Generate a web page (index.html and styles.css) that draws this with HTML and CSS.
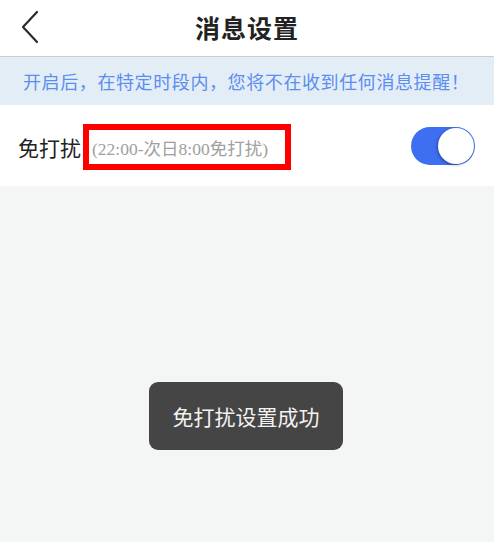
FILE: index.html
```html
<!DOCTYPE html>
<html lang="zh">
<head>
<meta charset="utf-8">
<title>消息设置</title>
<link rel="stylesheet" href="styles.css">
</head>
<body>
<div class="page">
  <header class="header">
    <span class="back">
      <svg width="20" height="34" viewBox="0 0 20 34"><path d="M17 2 L3 17 L17 32" fill="none" stroke="#2b2b2b" stroke-width="2.2" stroke-linecap="round" stroke-linejoin="round"/></svg>
    </span>
    <h1 class="title">消息设置</h1>
  </header>
  <div class="banner">开启后，在特定时段内，您将不在收到任何消息提醒！</div>
  <div class="row">
    <span class="label">免打扰</span>
    <span class="hint">(22:00-次日8:00免打扰)</span>
    <span class="toggle"><span class="knob"></span></span>
  </div>
  <div class="toast">免打扰设置成功</div>
</div>
</body>
</html>
```
FILE: styles.css
```css
* { box-sizing: border-box; }
html, body { margin: 0; padding: 0; }
body {
  font-family: "Noto Sans CJK SC", "Noto Sans", sans-serif;
  background: #f4f5f5;
}
.page {
  position: relative;
  width: 494px;
  height: 542px;
  overflow: hidden;
  background: #f4f5f5;
}
.header {
  position: relative;
  height: 57px;
  background: #fff;
  border-bottom: 1px solid #c9ced3;
  display: flex;
  align-items: center;
  justify-content: center;
}
.back {
  position: absolute;
  left: 20px;
  top: 10px;
  display: flex;
}
.title {
  margin: 0;
  font-size: 25px;
  font-weight: 700;
  color: #222;
  letter-spacing: 1px;
  line-height: 1;
  margin-top: -2px;
}
.banner {
  height: 48px;
  background: #e3edf6;
  color: #5b8ef0;
  font-size: 18px;
  line-height: 48px;
  padding-left: 23px;
  letter-spacing: 0.6px;
}
.row {
  height: 81px;
  background: #fff;
  display: flex;
  align-items: center;
  padding-left: 18px;
  padding-right: 19px;
}
.label {
  font-size: 21px;
  color: #222;
  margin-top: 3px;
}
.hint {
  margin-left: 2px;
  margin-top: 3px;
  height: 46px;
  width: 208px;
  border: 6px solid #ff0000;
  padding-left: 3px;
  display: flex;
  align-items: center;
  font-family: "Liberation Serif", "Noto Sans CJK SC", serif;
  font-size: 17.5px;
  color: #a0a0a0;
  white-space: nowrap;
}
.toggle {
  margin-left: auto;
  position: relative;
  width: 64px;
  height: 38px;
  border-radius: 19px;
  background: #3e6ff1;
}
.knob {
  position: absolute;
  right: 1px;
  top: 1px;
  width: 36px;
  height: 36px;
  border-radius: 50%;
  background: #fff;
  box-shadow: -1px 1px 3px rgba(0,0,0,0.35);
}
.toast {
  position: absolute;
  left: 149px;
  top: 382px;
  width: 194px;
  height: 68px;
  border-radius: 9px;
  background: #454545;
  color: #f2f2f2;
  font-size: 21px;
  display: flex;
  align-items: center;
  justify-content: center;
}
```
